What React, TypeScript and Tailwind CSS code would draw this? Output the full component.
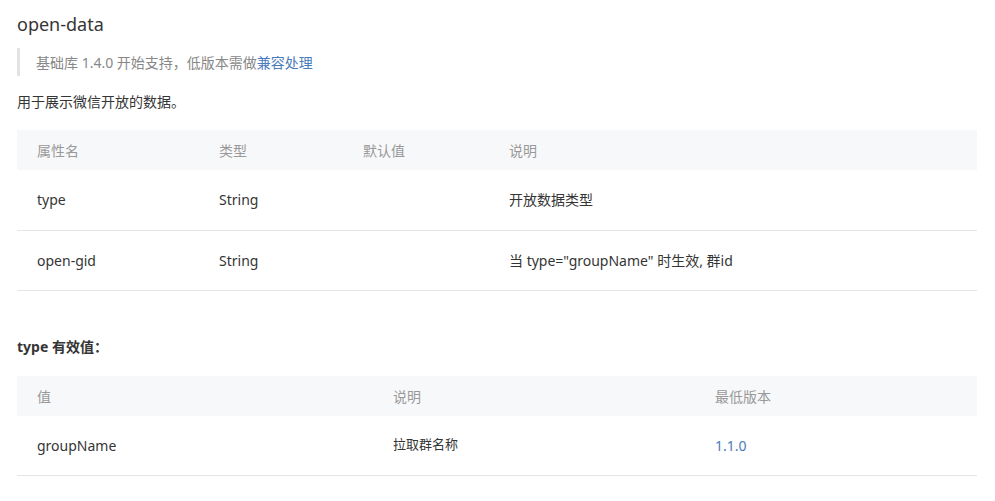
const font = { fontFamily: '"Noto Sans", "Noto Sans CJK SC", sans-serif' }

const attrs = [
  { name: "type", type: "String", def: "", desc: "开放数据类型" },
  { name: "open-gid", type: "String", def: "", desc: '当 type="groupName" 时生效, 群id' },
]

export default function App() {
  return (
    <div className="bg-white w-[995px] h-[501px] px-[17px] pt-[10px] text-[#353535]" style={font}>
      <h3 className="text-[18px] leading-[28px] font-normal">open-data</h3>

      <div className="mt-[10px] border-l-[3px] border-[#e3e3e3] pl-[16px] h-[28px] flex items-center text-[14px] text-[#888]">
        基础库 1.4.0 开始支持，低版本需做<span className="text-[#4a7bbb]">兼容处理</span>
      </div>

      <p className="mt-[14px] text-[14px] leading-[24px]">用于展示微信开放的数据。</p>

      <div className="mt-[16px] w-[960px] text-[14px]">
        <div className="flex h-[40px] items-center bg-[#f7f8f9] text-[#999]">
          <div className="w-[202px] pl-[20px]">属性名</div>
          <div className="w-[144px]">类型</div>
          <div className="w-[146px]">默认值</div>
          <div className="flex-1">说明</div>
        </div>
        {attrs.map((a, i) => (
          <div
            key={a.name}
            className={`flex items-center border-b border-[#e5e5e5] pb-[1px] ${i === 0 ? "h-[61px]" : "h-[60px]"}`}
          >
            <div className="w-[202px] pl-[20px]">{a.name}</div>
            <div className="w-[144px]">{a.type}</div>
            <div className="w-[146px]">{a.def}</div>
            <div className="flex-1">{a.desc}</div>
          </div>
        ))}
      </div>

      <p className="mt-[45px] text-[14px] font-bold leading-[22px]">type 有效值：</p>

      <div className="mt-[18px] w-[960px] text-[14px]">
        <div className="flex h-[40px] items-center bg-[#f7f8f9] text-[#999]">
          <div className="w-[356px] pl-[20px]">值</div>
          <div className="w-[322px] pl-[20px]">说明</div>
          <div className="flex-1 pl-[20px]">最低版本</div>
        </div>
        <div className="flex h-[60px] items-center border-b border-[#e5e5e5] pb-[1px]">
          <div className="w-[356px] pl-[20px]">groupName</div>
          <div className="w-[322px] pl-[20px] text-[13px]">拉取群名称</div>
          <div className="flex-1 pl-[20px] text-[#4a7bbb]">1.1.0</div>
        </div>
      </div>
    </div>
  )
}
